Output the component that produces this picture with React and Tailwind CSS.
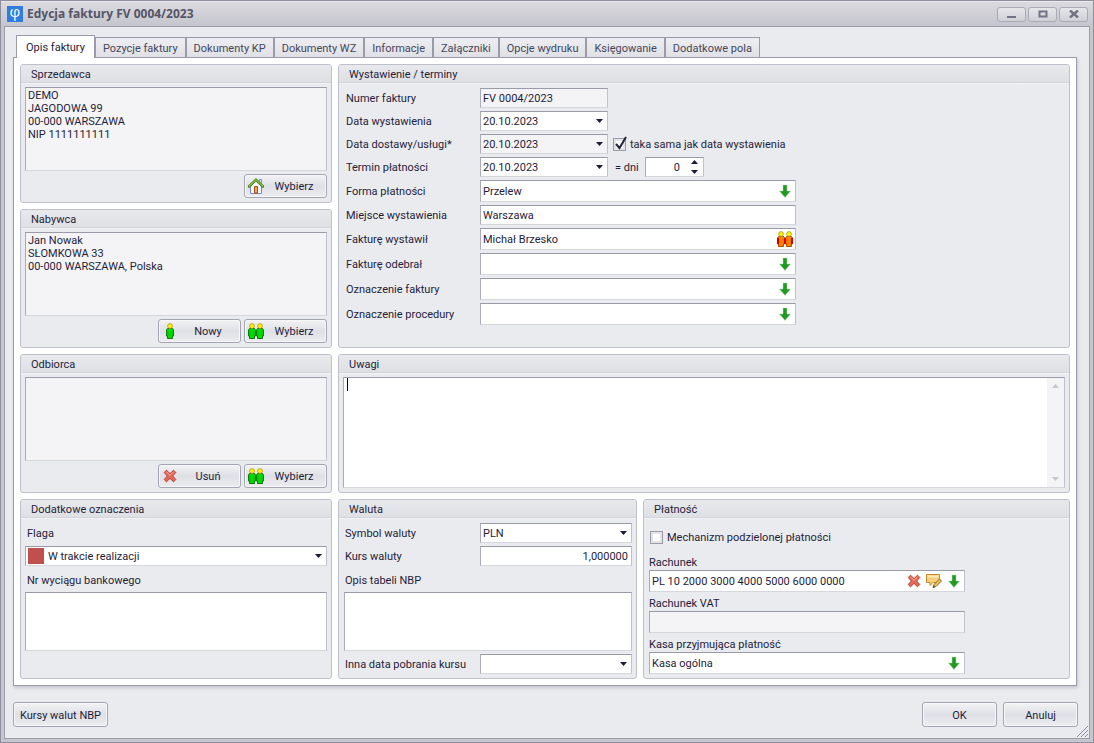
import React from 'react';
import { clsx } from 'clsx';

const TABS = [
  'Opis faktury',
  'Pozycje faktury',
  'Dokumenty KP',
  'Dokumenty WZ',
  'Informacje',
  'Załączniki',
  'Opcje wydruku',
  'Księgowanie',
  'Dodatkowe pola',
];

// Sunken edge shared by every text field
const EDGE = 'border border-t-[#9a9aa9] border-l-[#aaaab8] border-r-[#c0c1cc] border-b-[#d6d7dd]';

/* ---------- icons ---------- */

function ArrowDown() {
  return (
    <svg width="16" height="16" viewBox="0 0 16 16" aria-hidden="true">
      <path d="M6 2h4v6h3.500L8 14.500 2.500 8H6z" fill="#229a22" stroke="#a9d8a9" strokeWidth="0.500" />
    </svg>
  );
}

function Person({ x, fill, stroke }) {
  return (
    <g transform={`translate(${x} 0)`}>
      <path d="M1.500 5.500h5l1 1.500v6h-1v2.500h-5V13h-1V7z" fill={fill} stroke={stroke} />
      <path d="M2 8v5M6 8v5" stroke={stroke} strokeOpacity="0.300" />
      <circle cx="4" cy="3" r="2.400" fill="#fff200" stroke="#a89b22" strokeWidth="0.800" />
    </g>
  );
}

function OnePerson() {
  return (
    <svg width="16" height="16" viewBox="0 0 16 16" aria-hidden="true">
      <Person x={4} fill="#00dc00" stroke="#0a7a10" />
    </svg>
  );
}

function TwoPeople({ tone = 'green' }) {
  const fill = tone === 'green' ? '#00dc00' : '#ff8000';
  const stroke = tone === 'green' ? '#0a7a10' : '#a85000';
  return (
    <svg width="16" height="16" viewBox="0 0 16 16" aria-hidden="true">
      <Person x={0} fill={fill} stroke={stroke} />
      <Person x={8} fill={fill} stroke={stroke} />
      {tone !== 'green' && <path d="M0 7h2v6H0zM7 7h2v6H7zM14 7h2v6h-2z" fill="#d40000" />}
    </svg>
  );
}

function RedCross() {
  return (
    <svg width="16" height="16" viewBox="0 0 16 16" aria-hidden="true">
      <path
        d="M4.500 2.200 8 5.600l3.500-3.400 2.300 2.300L10.600 8l3.200 3.500-2.300 2.300L8 10.400l-3.500 3.400-2.300-2.300L5.400 8 2.200 4.500z"
        fill="#e26a58"
        stroke="#b93a34"
        strokeLinejoin="round"
      />
      <path d="M4.500 4 8 7.200 11.500 4" fill="none" stroke="#f4aca0" />
    </svg>
  );
}

function House() {
  return (
    <svg width="16" height="16" viewBox="0 0 16 16" aria-hidden="true">
      <path d="M11.500 1.500h2v4h-2z" fill="#dfe6f3" stroke="#7d8fbd" />
      <path d="M2.500 8 8 3l5.500 5v7.500h-11z" fill="#f6f8fc" stroke="#7587bb" />
      <path d="M1 8.500 8 1.800l7 6.700" fill="none" stroke="#4f8a26" strokeWidth="2.600" strokeLinecap="round" />
      <path d="M1.300 8 8 1.700 14.700 8" fill="none" stroke="#9bd05a" strokeLinecap="round" />
      <path d="M6.500 8.500h3v6.500h-3z" fill="#f0a45a" stroke="#a9501c" />
    </svg>
  );
}

function NoteEdit() {
  return (
    <svg width="16" height="16" viewBox="0 0 16 16" aria-hidden="true">
      <path d="M.5 1.500h13v8H7l-3 3v-3H.5z" fill="#f7cf7c" stroke="#c58a2e" strokeLinejoin="round" />
      <path d="M1.500 2.500h11v2h-11z" fill="#fde9b8" />
      <path d="m7 14.500 1-3 5.500-5.500 2 2L10 13.500z" fill="#f0bd4e" stroke="#8d6a2c" strokeLinejoin="round" />
      <path d="m7 14.500.6-2 1.400 1.400z" fill="#333a55" />
    </svg>
  );
}

function Caret({ up = false, fill = '#1d1b33' }) {
  return (
    <svg width="7" height="4" viewBox="0 0 7 4" aria-hidden="true">
      <path d={up ? 'M0 4h7L3.500 0z' : 'M0 0h7L3.500 4z'} fill={fill} />
    </svg>
  );
}

/* ---------- form parts ---------- */

function Group({ title, className, bodyClass, children }) {
  return (
    <section className={clsx('flex flex-col rounded-[3px] border border-[#bfc0cb] bg-[#eaebef]', className)}>
      <h2 className="h-[18px] rounded-t-[2px] border-b border-[#d3d4da] bg-linear-to-b from-[#e8e9ec] to-[#dfe0e4] pl-2.5 leading-[19px]">
        {title}
      </h2>
      <div className={clsx('flex flex-1 flex-col border-t border-[#f3f3f6] pr-1 pb-1', bodyClass)}>{children}</div>
    </section>
  );
}

function Row({ id, label, labelClass = 'w-[134px]', children }) {
  return (
    <div className="flex items-center">
      <label htmlFor={id} className={clsx('shrink-0 pt-0.5', labelClass)}>
        {label}
      </label>
      {children}
    </div>
  );
}

function TextField({ id, value, className = 'w-[316px]', tall = false, readOnly = false, align, children }) {
  return (
    <div className={clsx('flex items-center', EDGE, tall ? 'h-[22px]' : 'h-5', readOnly ? 'bg-[#f4f4f7]' : 'bg-white', className)}>
      <input
        id={id}
        type="text"
        defaultValue={value}
        readOnly={readOnly}
        className={clsx(
          'h-full min-w-0 flex-1 bg-transparent pl-0.5 outline-none',
          align === 'right' ? 'pr-[3px] text-right' : 'pr-0.5'
        )}
      />
      {children && <div className="flex gap-1 pr-0.5">{children}</div>}
    </div>
  );
}

function IconButton({ label, children }) {
  return (
    <button type="button" aria-label={label} className="size-4">
      {children}
    </button>
  );
}

function SelectField({ id, value, className, disabled = false, swatch = false }) {
  return (
    <div className={clsx('relative flex h-5 items-center', EDGE, disabled ? 'bg-[#f4f4f7]' : 'bg-white', className)}>
      {swatch && <span className="ml-0.5 size-4 shrink-0 bg-[#c0504d]" />}
      <select
        id={id}
        defaultValue={value}
        className={clsx('h-full min-w-0 flex-1 appearance-none bg-transparent pt-0.5 outline-none', swatch ? 'pl-1' : 'pl-0.5')}
      >
        <option value={value}>{value}</option>
      </select>
      <span className="pointer-events-none absolute right-1">
        <Caret />
      </span>
    </div>
  );
}

function CheckBox({ id, label, checked = false }) {
  return (
    <div className="flex items-center gap-1">
      <span className="relative size-[13px]">
        <input
          id={id}
          type="checkbox"
          defaultChecked={checked}
          className="peer block size-[13px] appearance-none border border-[#9a9aa9] bg-white shadow-[inset_0_0_0_2px_#e3e3e9]"
        />
        <svg
          width="15"
          height="15"
          viewBox="0 0 15 15"
          aria-hidden="true"
          className="pointer-events-none absolute -top-0.5 left-0 hidden peer-checked:block"
        >
          <path d="m3 8 3.500 4L13 1" fill="none" stroke="#25233c" strokeWidth="2" />
        </svg>
      </span>
      <label htmlFor={id} className="pt-px">
        {label}
      </label>
    </div>
  );
}

const BUTTON =
  'rounded-[3px] border border-[#a4a5b3] bg-linear-to-b from-[#f3f3f5] via-[#dfe0e6] to-[#ececf0] shadow-[inset_0_0_0_1px_#f7f7f9]';

function ActionButton({ icon, children }) {
  return (
    <button type="button" className={clsx(BUTTON, 'flex h-6 w-[83px] items-center pr-0.5 pl-[3px]')}>
      {icon}
      <span className="flex-1 pt-0.5">{children}</span>
    </button>
  );
}

function Party({ id, title, lines = [], children }) {
  return (
    <Group title={title} bodyClass="gap-[3px] pl-1 pt-[3px]">
      <textarea
        id={id}
        aria-label={title}
        readOnly
        defaultValue={lines.join('\n')}
        className={clsx('block h-[84px] resize-none bg-[#f4f4f7] px-0.5 py-px leading-[13px] outline-none', EDGE)}
      />
      <div className="flex justify-end gap-[3px]">{children}</div>
    </Group>
  );
}

function WindowButton({ label, children }) {
  return (
    <button
      type="button"
      aria-label={label}
      className="flex h-[15px] w-[29px] items-center justify-center rounded-[3px] border border-[#a9aab5] bg-linear-to-b from-[#e6e6ea] to-[#cfd0d7]"
    >
      <svg width="10" height="8" viewBox="0 0 10 8" fill="none" stroke="#737386" strokeWidth="2" aria-hidden="true">
        {children}
      </svg>
    </button>
  );
}

function TitleBar() {
  return (
    <header className="flex h-[25px] items-center border-t border-[#e9e9ed] bg-linear-to-b from-[#dadade] to-[#c5c5ce] pr-[5px] pl-1.5">
      <span className="flex size-4 justify-center bg-[#2f7de1] font-['Open_Sans',sans-serif] text-[15px] leading-[11px] text-white">
        φ
      </span>
      <h1 className="ml-1 flex-1 font-['Open_Sans',sans-serif] text-xs font-bold text-[#555566]">
        Edycja faktury FV 0004/2023
      </h1>
      <div className="flex gap-0.5">
        <WindowButton label="Minimalizuj">
          <path d="M0 7h9" />
        </WindowButton>
        <WindowButton label="Maksymalizuj">
          <path d="M1.500 1.500h7v5h-7z" />
        </WindowButton>
        <WindowButton label="Zamknij">
          <path d="m1 .5 8 7M9 .5l-8 7" strokeWidth="2.500" />
        </WindowButton>
      </div>
    </header>
  );
}

function Tabs() {
  return (
    <div role="tablist" className="flex h-[22px] items-end pl-[3px]">
      {TABS.map((tab, i) => (
        <button
          key={tab}
          type="button"
          role="tab"
          aria-selected={i === 0}
          className={
            i === 0
              ? 'relative z-10 -mb-px h-[23px] border border-b-0 border-[#9a9aa9] bg-white px-[9px] pt-px'
              : 'h-5 border border-b-0 border-[#9a9aa9] bg-linear-to-b from-[#eeeef2] to-[#e0e1e6] px-[7px] pt-0.5 text-[#46465a]'
          }
        >
          {tab}
        </button>
      ))}
    </div>
  );
}

export default function App() {
  return (
    <div className="flex min-h-screen flex-col border border-[#8e8e9d] bg-[#c6c6cf] font-['Roboto','Noto_Sans',sans-serif] text-[11px] leading-[14px] text-[#1f1d3a]">
      <TitleBar />
      <main className="mx-[3px] mb-[3px] flex flex-1 flex-col border border-[#9c9cab] bg-[#eaebef] pt-2 pr-3 pb-[11px] pl-2">
        <Tabs />
        <div
          role="tabpanel"
          className="grid grid-cols-[312px_299px_1fr] gap-1.5 border border-[#9a9aa9] bg-white p-1.5 shadow-[1px_2px_3px_#c4c5ce]"
        >
          <Party id="seller" title="Sprzedawca" lines={['DEMO', 'JAGODOWA 99', '00-000 WARSZAWA', 'NIP 1111111111']}>
            <ActionButton icon={<House />}>Wybierz</ActionButton>
          </Party>

          <Group title="Wystawienie / terminy" className="col-span-2 row-span-2" bodyClass="gap-[3px] pl-[7px] pt-1">
            <Row id="number" label="Numer faktury">
              <TextField id="number" value="FV 0004/2023" className="w-32" readOnly />
            </Row>
            <Row id="issued" label="Data wystawienia">
              <SelectField id="issued" value="20.10.2023" className="w-32" />
            </Row>
            <Row id="delivered" label="Data dostawy/usługi*">
              <SelectField id="delivered" value="20.10.2023" className="mr-[5px] w-32" disabled />
              <CheckBox id="same-date" label="taka sama jak data wystawienia" checked />
            </Row>
            <Row id="due" label="Termin płatności">
              <SelectField id="due" value="20.10.2023" className="w-32" />
              <label htmlFor="days" className="w-[37px] pt-0.5 pl-[7px]">
                = dni
              </label>
              <TextField id="days" value="0" className="w-[59px]" align="right">
                <span className="flex w-[18px] flex-col items-center gap-1.5 pl-1">
                  <button type="button" aria-label="Więcej dni">
                    <Caret up />
                  </button>
                  <button type="button" aria-label="Mniej dni">
                    <Caret />
                  </button>
                </span>
              </TextField>
            </Row>
            <Row id="method" label="Forma płatności">
              <TextField id="method" value="Przelew" tall>
                <IconButton label="Wybierz formę">
                  <ArrowDown />
                </IconButton>
              </TextField>
            </Row>
            <Row id="place" label="Miejsce wystawienia">
              <TextField id="place" value="Warszawa" />
            </Row>
            <Row id="issuer" label="Fakturę wystawił">
              <TextField id="issuer" value="Michał Brzesko" tall>
                <IconButton label="Wybierz osobę">
                  <TwoPeople tone="orange" />
                </IconButton>
              </TextField>
            </Row>
            {[
              ['receiver', 'Fakturę odebrał'],
              ['mark', 'Oznaczenie faktury'],
              ['procedure', 'Oznaczenie procedury'],
            ].map(([id, label]) => (
              <Row key={id} id={id} label={label}>
                <TextField id={id} value="" tall>
                  <IconButton label={label}>
                    <ArrowDown />
                  </IconButton>
                </TextField>
              </Row>
            ))}
          </Group>

          <Party id="buyer" title="Nabywca" lines={['Jan Nowak', 'SŁOMKOWA 33', '00-000 WARSZAWA, Polska']}>
            <ActionButton icon={<OnePerson />}>Nowy</ActionButton>
            <ActionButton icon={<TwoPeople />}>Wybierz</ActionButton>
          </Party>

          <Party id="recipient" title="Odbiorca">
            <ActionButton icon={<RedCross />}>Usuń</ActionButton>
            <ActionButton icon={<TwoPeople />}>Wybierz</ActionButton>
          </Party>

          <Group title="Uwagi" className="col-span-2" bodyClass="pl-1 pt-[3px]">
            <div className={clsx('relative flex flex-1 bg-white', EDGE)}>
              <textarea aria-label="Uwagi" className="flex-1 resize-none px-1 leading-[13px] outline-none" />
              {/* text cursor */}
              <span className="absolute top-0 left-[3px] h-[13px] w-px bg-black" />
              <div className="flex w-[17px] flex-col items-center justify-between bg-[#f4f4f7] py-1.5">
                <Caret up fill="#c6c6cc" />
                <Caret fill="#c6c6cc" />
              </div>
            </div>
          </Group>

          <Group title="Dodatkowe oznaczenia" bodyClass="pl-1">
            <label htmlFor="flag" className="h-[27px] pt-2 pl-0.5">
              Flaga
            </label>
            <SelectField id="flag" value="W trakcie realizacji" swatch />
            <label htmlFor="statement" className="h-[26px] pt-2 pl-0.5">
              Nr wyciągu bankowego
            </label>
            <textarea id="statement" className={clsx('h-[59px] resize-none bg-white px-0.5 outline-none', EDGE)} />
          </Group>

          <Group title="Waluta" bodyClass="pl-[5px] pt-1">
            <div className="flex flex-col gap-[3px]">
              <Row id="currency" label="Symbol waluty" labelClass="w-[136px] pl-px">
                <SelectField id="currency" value="PLN" className="flex-1" />
              </Row>
              <Row id="rate" label="Kurs waluty" labelClass="w-[136px] pl-px">
                <TextField id="rate" value="1,000000" className="flex-1" align="right" />
              </Row>
            </div>
            <label htmlFor="table" className="h-[26px] pt-2 pl-px">
              Opis tabeli NBP
            </label>
            <textarea id="table" className={clsx('mb-[3px] h-[59px] resize-none bg-white px-0.5 outline-none', EDGE)} />
            <Row id="other-date" label="Inna data pobrania kursu" labelClass="w-[136px] pl-px">
              <SelectField id="other-date" value="" className="flex-1" />
            </Row>
          </Group>

          <Group title="Płatność" bodyClass="pl-[5px] pt-[11px]">
            <div className="h-[21px] pl-px">
              <CheckBox id="split" label="Mechanizm podzielonej płatności" />
            </div>
            <label htmlFor="account" className="h-[19px] pt-[5px]">
              Rachunek
            </label>
            <TextField id="account" value="PL 10 2000 3000 4000 5000 6000 0000" tall>
              <IconButton label="Usuń rachunek">
                <RedCross />
              </IconButton>
              <IconButton label="Edytuj rachunek">
                <NoteEdit />
              </IconButton>
              <IconButton label="Wybierz rachunek">
                <ArrowDown />
              </IconButton>
            </TextField>
            <label htmlFor="vat-account" className="h-[19px] pt-[5px]">
              Rachunek VAT
            </label>
            <TextField id="vat-account" value="" tall readOnly />
            <label htmlFor="cash" className="h-[19px] pt-[5px]">
              Kasa przyjmująca płatność
            </label>
            <TextField id="cash" value="Kasa ogólna" tall>
              <IconButton label="Wybierz kasę">
                <ArrowDown />
              </IconButton>
            </TextField>
          </Group>
        </div>

        <footer className="relative -mr-px mt-4 flex gap-1.5">
          <button type="button" className={clsx(BUTTON, 'mr-auto h-[25px] w-[95px] pt-0.5')}>
            Kursy walut NBP
          </button>
          <button type="button" className={clsx(BUTTON, 'h-[25px] w-[75px] pt-0.5')}>
            OK
          </button>
          <button type="button" className={clsx(BUTTON, 'h-[25px] w-[75px] pt-0.5')}>
            Anuluj
          </button>
          {/* resize grip */}
          <svg
            width="11"
            height="11"
            viewBox="0 0 11 11"
            stroke="#8e8e9d"
            aria-hidden="true"
            className="absolute -right-[10px] -bottom-[10px]"
          >
            <path d="M0 11 11 0M4 11l7-7M8 11l3-3" />
          </svg>
        </footer>
      </main>
    </div>
  );
}
